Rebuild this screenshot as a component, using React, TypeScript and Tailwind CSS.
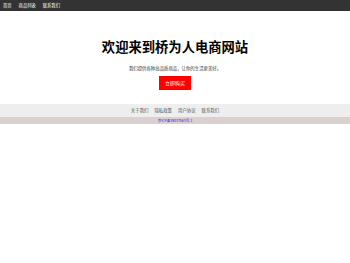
export default function App() {
  const font = { fontFamily: '"Noto Sans CJK SC", "Noto Sans", sans-serif' };
  return (
    <div className="w-[350px] h-[263px] bg-white" style={font}>
      <nav className="h-[11px] bg-[#333333] flex items-center pl-[3px] gap-[7px] text-white text-[4.3px] leading-none">
        <span>首页</span>
        <span>商品列表</span>
        <span>联系我们</span>
      </nav>
      <section className="flex flex-col items-center pt-[29px] h-[93px]">
        <h1 className="text-[13.3px] font-bold leading-none text-black">欢迎来到桥为人电商网站</h1>
        <p className="mt-[13px] text-[4.4px] leading-none text-[#333]">我们提供各种高品质商品，让你的生活更美好。</p>
        <button className="mt-[5px] w-[32px] h-[14px] bg-[#ff0000] text-white text-[5px] leading-none flex items-center justify-center">立即购买</button>
      </section>
      <footer>
        <div className="h-[13px] bg-[#eeeeee] flex items-center justify-center gap-[6px] text-[4.4px] leading-none text-[#555]">
          <span>关于我们</span>
          <span>隐私政策</span>
          <span>用户协议</span>
          <span>联系我们</span>
        </div>
        <div className="h-[7px] bg-[#dccfcf] flex items-center justify-center text-[3.5px] leading-none text-[#2222ee]">
          京ICP备19037563号-1
        </div>
      </footer>
    </div>
  );
}
